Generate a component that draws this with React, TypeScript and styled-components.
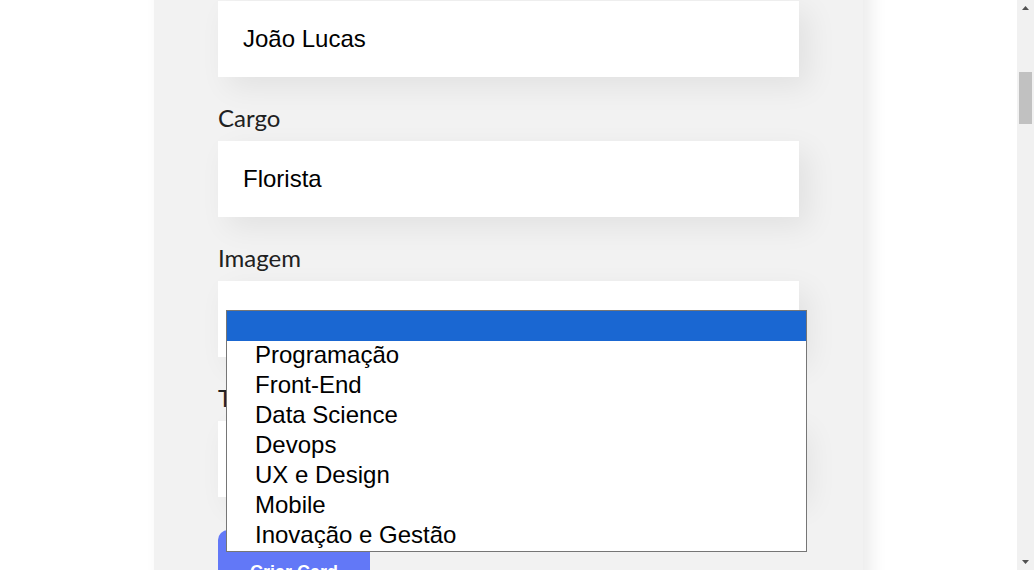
import { useLayoutEffect, useRef } from 'react';
import styled, { createGlobalStyle } from 'styled-components';

const times = [
  { nome: 'Programação', cor: '#d9f7e9' },
  { nome: 'Front-End', cor: '#e8f8ff' },
  { nome: 'Data Science', cor: '#f0f8e2' },
  { nome: 'Devops', cor: '#fde7e8' },
  { nome: 'UX e Design', cor: '#fae9f5' },
  { nome: 'Mobile', cor: '#fff5d9' },
  { nome: 'Inovação e Gestão', cor: '#ffeedf' },
];

export default function App() {
  const firstInput = useRef<HTMLInputElement>(null);

  useLayoutEffect(() => {
    // a página aparece rolada até o formulário
    const el = firstInput.current;
    if (!el) return;
    const top = el.getBoundingClientRect().top + window.scrollY - 1;
    window.scrollTo(0, top);
  }, []);

  return (
    <>
      <GlobalStyle />
      <Banner>
        <h1>Organo</h1>
        <p>Pessoas e times organizados em um só lugar!</p>
      </Banner>

      <FormSection>
        <Form onSubmit={(e) => e.preventDefault()}>
          <h2>Preencha os dados para criar o card do colaborador.</h2>

          <Field>
            <Label>Nome</Label>
            <TextInput ref={firstInput} defaultValue="João Lucas" />
          </Field>
          <Field>
            <Label>Cargo</Label>
            <TextInput defaultValue="Florista" />
          </Field>
          <Field>
            <Label>Imagem</Label>
            <TextInput defaultValue="" />
          </Field>
          <Field>
            <Label>Time</Label>
            <SelectWrap>
              <Select defaultValue="">
                <option value=""></option>
                {times.map((t) => (
                  <option key={t.nome}>{t.nome}</option>
                ))}
              </Select>
              <Listbox role="listbox">
                <Option $selected role="option" />
                {times.map((t) => (
                  <Option key={t.nome} role="option">
                    {t.nome}
                  </Option>
                ))}
              </Listbox>
            </SelectWrap>
          </Field>

          <Button type="submit">Criar Card</Button>
        </Form>
      </FormSection>

      <Organization>
        <h2>Minha Organização</h2>
        {times.map((t) => (
          <Team key={t.nome} $bg={t.cor}>
            <h3>{t.nome}</h3>
          </Team>
        ))}
      </Organization>

      <Footer>Desenvolvido por Alura.</Footer>

      <Scrollbar aria-hidden>
        <Arrow viewBox="0 0 7 4">
          <path d="M0 4 L3.5 0 L7 4 Z" />
        </Arrow>
        <Track>
          <Thumb />
        </Track>
        <Arrow viewBox="0 0 7 4">
          <path d="M0 0 L3.5 4 L7 0 Z" />
        </Arrow>
      </Scrollbar>
    </>
  );
}

const GlobalStyle = createGlobalStyle`
  body {
    margin: 0;
    padding-right: 17px;
    background: #fff;
    font-family: "Liberation Sans", Arial, sans-serif;
  }
  * {
    box-sizing: border-box;
  }
`;

const Banner = styled.header`
  height: 420px;
  background: linear-gradient(135deg, #6278f7, #8a9bff);
  color: #fff;
  display: flex;
  flex-direction: column;
  align-items: center;
  justify-content: center;
  font-family: Lato, sans-serif;
  h1 {
    margin: 0;
    font-size: 64px;
  }
  p {
    font-size: 24px;
  }
`;

const FormSection = styled.section`
  display: flex;
  justify-content: center;
  margin: 80px 0;
`;

const Form = styled.form`
  width: 709px;
  background: #f2f2f2;
  padding: 36px 64px;
  box-shadow: 8px 8px 16px rgba(0, 0, 0, 0.08);
  h2 {
    margin: 0 0 24px;
    font-family: Lato, sans-serif;
    font-weight: 400;
    font-size: 32px;
  }
`;

const Field = styled.div`
  display: flex;
  flex-direction: column;
  margin-bottom: 26px;
`;

const Label = styled.label`
  font-family: Lato, "Open Sans", sans-serif;
  font-size: 24px;
  color: #212121;
  margin-bottom: 9px;
`;

const TextInput = styled.input`
  width: 100%;
  height: 76px;
  padding: 0 24px 0 25px;
  border: none;
  outline: none;
  background: #fff;
  font-family: "Liberation Sans", Arial, sans-serif;
  font-size: 24px;
  color: #000;
  box-shadow: 10px 10px 30px rgba(0, 0, 0, 0.07);
`;

const SelectWrap = styled.div`
  position: relative;
`;

const Select = styled.select`
  width: 100%;
  height: 76px;
  padding: 0 24px;
  border: none;
  outline: none;
  background: #fff;
  font-family: "Liberation Sans", Arial, sans-serif;
  font-size: 24px;
  box-shadow: 10px 10px 30px rgba(0, 0, 0, 0.07);
`;

const Listbox = styled.ul`
  position: absolute;
  top: -111px;
  left: 8px;
  z-index: 10;
  width: 581px;
  margin: 0;
  padding: 0;
  list-style: none;
  background: #fff;
  border: 1px solid #767676;
`;

const Option = styled.li<{ $selected?: boolean }>`
  height: 30px;
  line-height: 28px;
  padding-left: 28px;
  font-family: "Liberation Sans", Arial, sans-serif;
  font-size: 24px;
  color: ${(p) => (p.$selected ? '#fff' : '#000')};
  background: ${(p) => (p.$selected ? '#1a67d2' : '#fff')};
`;

const Button = styled.button`
  margin-top: 7px;
  padding: 32px;
  border: none;
  border-radius: 10px;
  background: #6278f7;
  color: #fff;
  font-family: "Liberation Sans", Arial, sans-serif;
  font-size: 18px;
  font-weight: 700;
  cursor: pointer;
`;

const Organization = styled.section`
  text-align: center;
  font-family: Lato, sans-serif;
  h2 {
    font-size: 40px;
    color: #6278f7;
    margin: 0 0 40px;
  }
`;

const Team = styled.section<{ $bg: string }>`
  min-height: 560px;
  padding: 32px;
  background: ${(p) => p.$bg};
  h3 {
    margin: 0;
    font-size: 32px;
  }
`;

const Footer = styled.footer`
  height: 160px;
  display: flex;
  align-items: center;
  justify-content: center;
  background: #6278f7;
  color: #fff;
  font-family: Lato, sans-serif;
  font-size: 20px;
`;

const Scrollbar = styled.div`
  position: fixed;
  top: 0;
  right: 0;
  z-index: 20;
  width: 17px;
  height: 100vh;
  display: flex;
  flex-direction: column;
  align-items: center;
  background: #f1f1f1;
`;

const Arrow = styled.svg`
  flex: none;
  width: 7px;
  height: 4px;
  margin: 6px 0;
  fill: #505050;
`;

const Track = styled.div`
  flex: 1;
  width: 100%;
  padding: 56px 2px 0;
`;

const Thumb = styled.div`
  height: 52px;
  background: #c1c1c1;
`;
